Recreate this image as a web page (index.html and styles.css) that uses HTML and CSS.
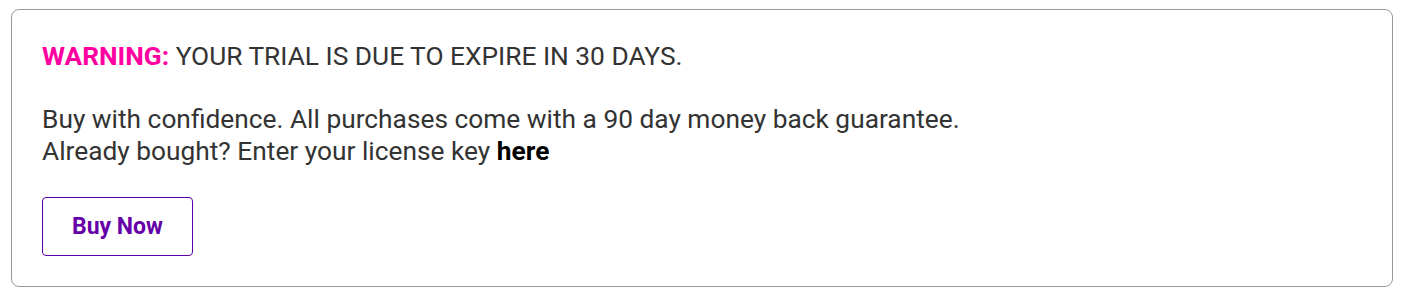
FILE: index.html
```html
<!DOCTYPE html>
<html lang="en">
<head>
  <meta charset="UTF-8">
  <title>Trial Notice</title>
  <link rel="stylesheet" href="styles.css">
</head>
<body>
  <div class="notice">
    <p class="warning"><strong>WARNING:</strong> YOUR TRIAL IS DUE TO EXPIRE IN 30 DAYS.</p>
    <p class="details">Buy with confidence. All purchases come with a 90 day money back guarantee.<br>
    Already bought? Enter your license key <a href="#">here</a></p>
    <button type="button" class="buy-btn">Buy Now</button>
  </div>
</body>
</html>
```

FILE: styles.css
```css
body {
  font-family: Roboto, "Liberation Sans", Arial, sans-serif;
  margin: 0;
  padding: 9px 10px 0 11px;
  color: #333;
}
.notice {
  border: 1px solid #999;
  border-radius: 8px;
  padding: 30px 30px 30px;
  font-size: 26.3px;
  line-height: 32px;
}
.warning {
  margin: 0 0 31px;
}
.warning strong {
  color: #ff00a0;
}
.details {
  margin: 0 0 30px;
}
.notice a {
  color: #000;
  font-weight: bold;
  text-decoration: none;
}
.buy-btn {
  display: block;
  width: 151px;
  height: 59px;
  padding: 0;
  background: #fff;
  border: 1px solid #5a00a8;
  border-radius: 4px;
  font-family: inherit;
  font-size: 23px;
  font-weight: bold;
  color: #6600a8;
  cursor: pointer;
}
```
